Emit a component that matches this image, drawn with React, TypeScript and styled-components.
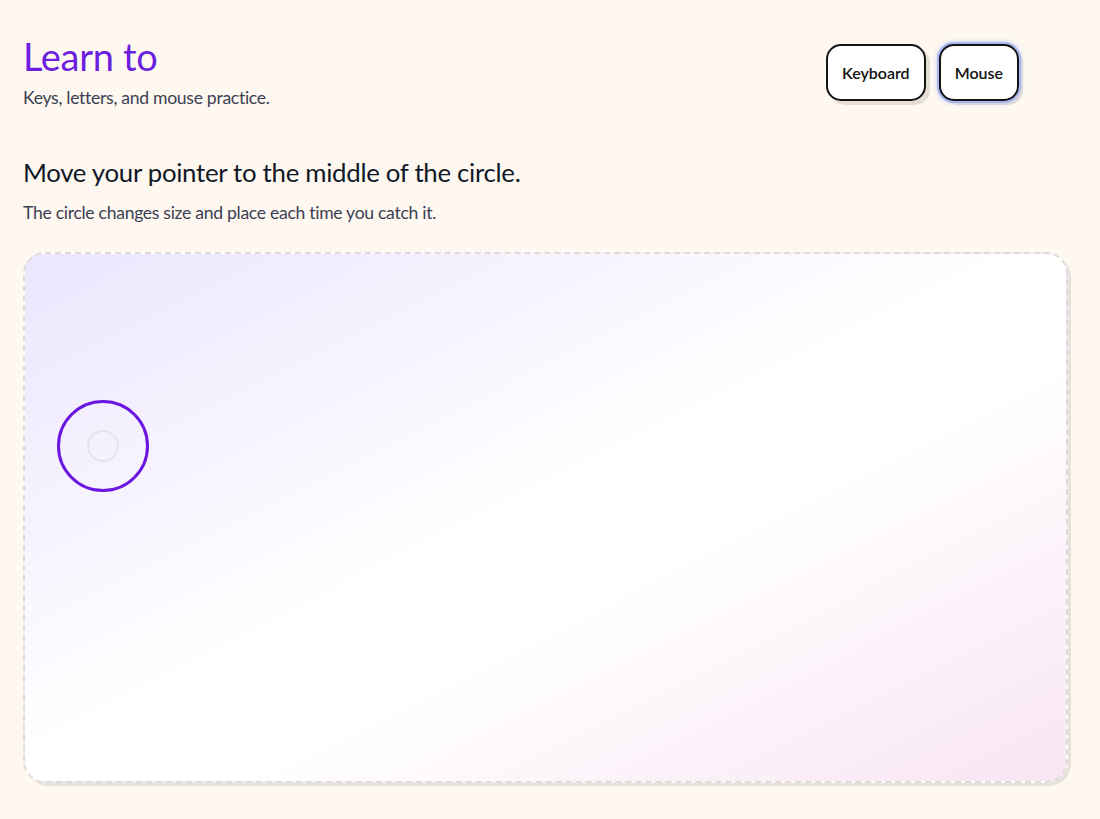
import styled, { createGlobalStyle } from 'styled-components';

const GlobalStyle = createGlobalStyle`
  html, body {
    margin: 0;
    padding: 0;
    background: #fef8f1;
  }
  body {
    font-family: Lato, "Noto Sans", sans-serif;
    color: #111827;
  }
`;

const Page = styled.main`
  min-height: 819px;
  box-sizing: border-box;
  padding: 30px 32px 32px 23px;
  display: flex;
  flex-direction: column;
`;

const Header = styled.header`
  display: flex;
  justify-content: space-between;
  align-items: flex-start;
  padding-right: 49px;
`;

const Brand = styled.div`
  display: flex;
  flex-direction: column;
`;

const Title = styled.h1`
  margin: 0;
  font-size: 38px;
  line-height: 52px;
  font-weight: 400;
  color: #6d1fe0;
  letter-spacing: -0.3px;
`;

const Tagline = styled.p`
  margin: 5px 0 0;
  font-size: 17.6px;
  color: #3b4054;
  letter-spacing: -0.3px;
`;

const Modes = styled.nav`
  display: flex;
  gap: 13px;
  margin-top: 14px;
`;

const ModeButton = styled.button<{ $active?: boolean }>`
  height: 57px;
  padding: 0 14px;
  border: 2px solid #141414;
  border-radius: 15px;
  background: #ffffff;
  font-family: Lato, "Noto Sans", sans-serif;
  font-size: 16px;
  font-weight: 600;
  color: #111;
  cursor: pointer;
  box-shadow: ${(p) =>
    p.$active
      ? '0 0 0 2px #a7b6ee, 0 0 5px 2px #c3cdf3, 4px 4px 0 #e4ded4'
      : '4px 4px 0 #e4ded4'};
`;

const Prompt = styled.section`
  margin-top: 49px;
`;

const Heading = styled.h2`
  margin: 0;
  font-size: 25.8px;
  font-weight: 400;
  color: #111827;
  letter-spacing: -0.3px;
`;

const Hint = styled.p`
  margin: 15px 0 0;
  font-size: 17.6px;
  color: #3b4054;
  letter-spacing: -0.3px;
`;

const Board = styled.div`
  position: relative;
  margin-top: 29px;
  height: 527px;
  border: 2px dashed #dedbd8;
  border-radius: 22px;
  background: linear-gradient(
    to bottom right,
    #ebe6fd 0%,
    #f8f5ff 30%,
    #ffffff 48%,
    #ffffff 60%,
    #f8e5f3 100%
  );
  box-shadow: 3px 3px 0 #e7e2db;
  overflow: hidden;
`;

const Target = styled.div`
  position: absolute;
  box-sizing: border-box;
  border: 3px solid #6a16e0;
  border-radius: 50%;
  display: flex;
  align-items: center;
  justify-content: center;
`;

const Bullseye = styled.div`
  width: 32px;
  height: 32px;
  box-sizing: border-box;
  border: 2px solid #e6e3e8;
  border-radius: 50%;
`;

const target = { x: 80, y: 194, size: 92 };

export default function App() {
  return (
    <>
      <GlobalStyle />
      <Page>
        <Header>
          <Brand>
            <Title>Learn to</Title>
            <Tagline>Keys, letters, and mouse practice.</Tagline>
          </Brand>
          <Modes>
            <ModeButton>Keyboard</ModeButton>
            <ModeButton $active>Mouse</ModeButton>
          </Modes>
        </Header>
        <Prompt>
          <Heading>Move your pointer to the middle of the circle.</Heading>
          <Hint>The circle changes size and place each time you catch it.</Hint>
        </Prompt>
        <Board>
          <Target
            style={{
              left: target.x - target.size / 2 - 2,
              top: target.y - target.size / 2 - 2,
              width: target.size,
              height: target.size,
            }}
          >
            <Bullseye />
          </Target>
        </Board>
      </Page>
    </>
  );
}
